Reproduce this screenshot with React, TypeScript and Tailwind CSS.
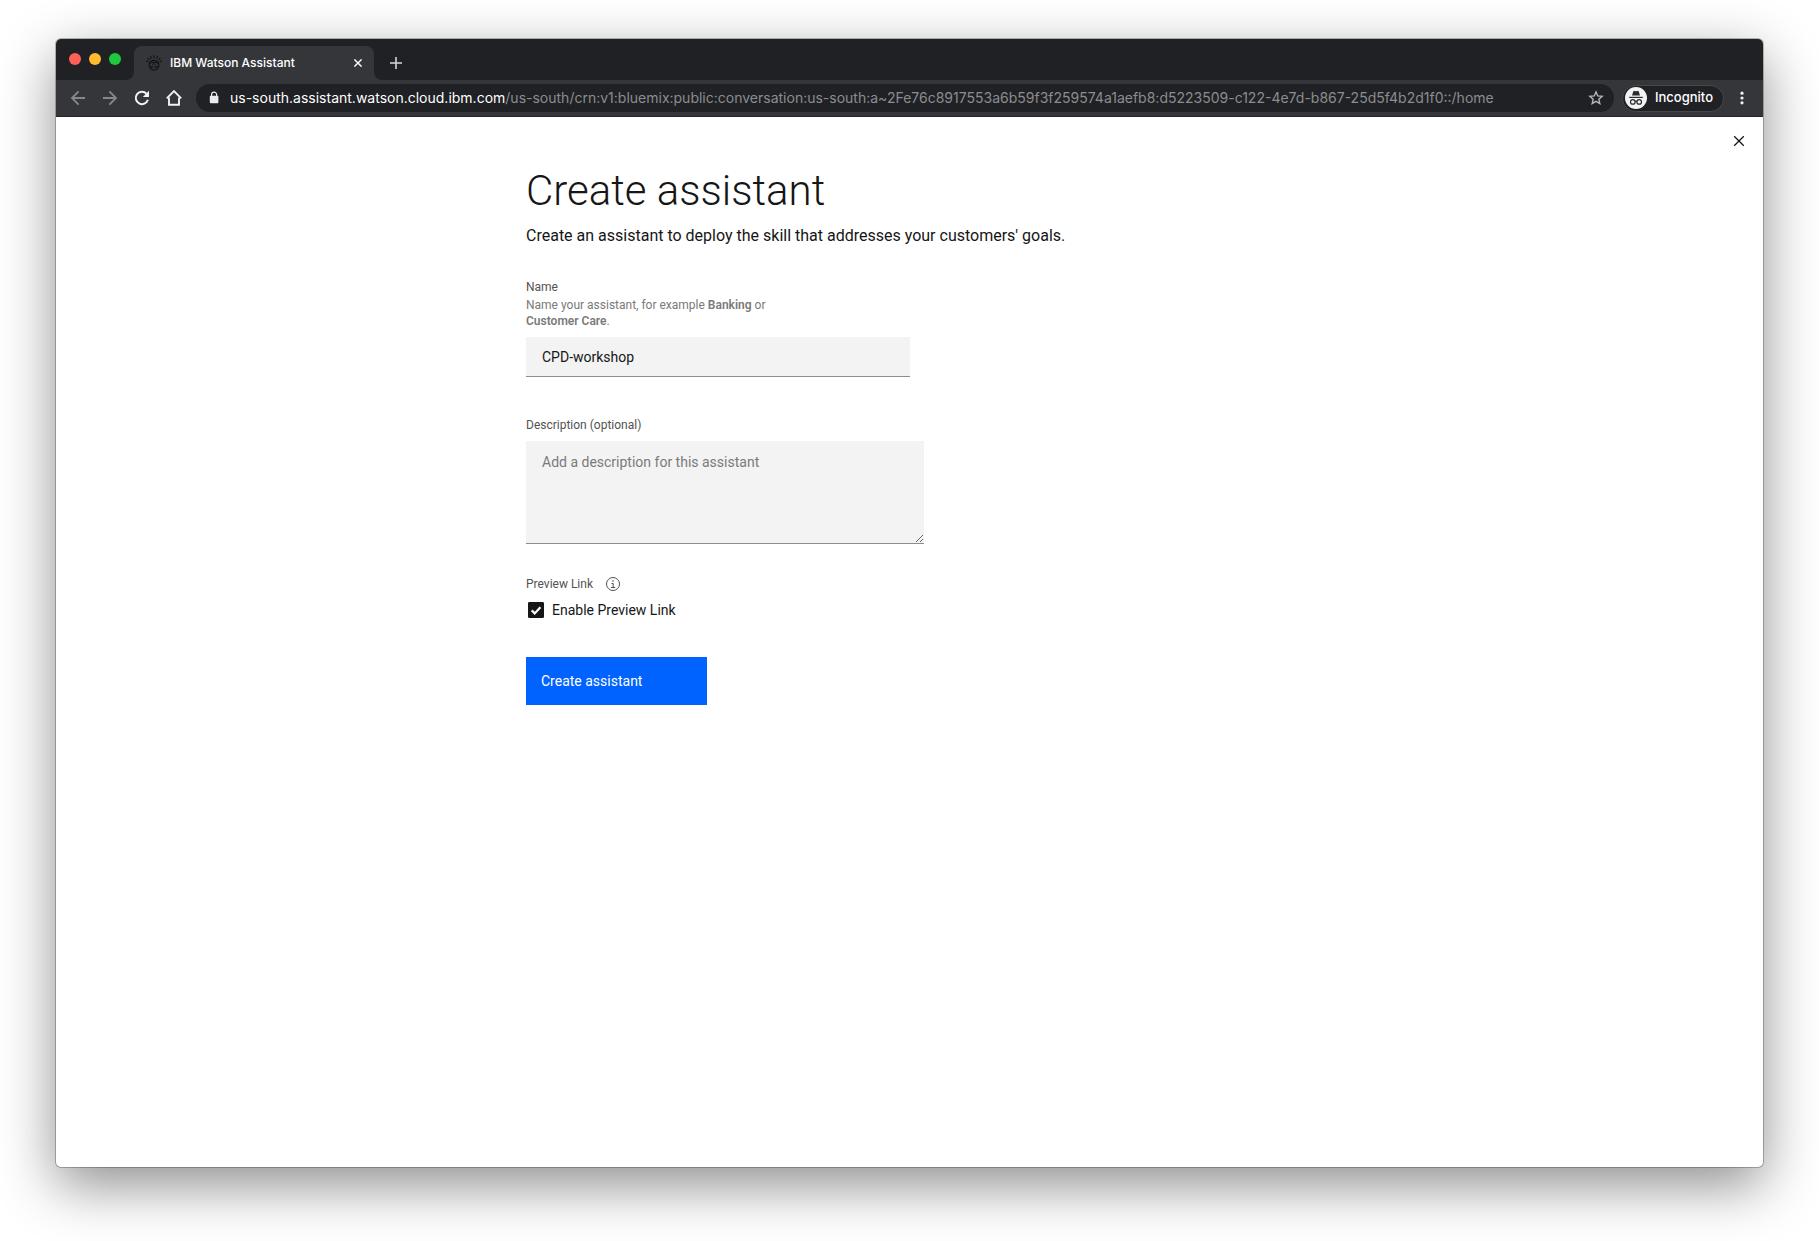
import { useState } from "react";
import type { ReactNode } from "react";

function IconButton({
  label,
  className,
  children,
}: {
  label: string;
  className: string;
  children: ReactNode;
}) {
  return (
    <button type="button" aria-label={label} className={`flex shrink-0 items-center justify-center ${className}`}>
      {children}
    </button>
  );
}

function WatsonLogo() {
  return (
    <svg viewBox="0 0 16 16" className="size-4 shrink-0 text-[#121315]" fill="none" stroke="currentColor" aria-hidden="true">
      <circle cx="8" cy="10.2" r="4.9" strokeWidth="1.2" />
      <path
        d="M3.6 8.4c2.6-1.4 6.2-1.4 8.8 0M3.2 11c3 1.6 6.6 1.6 9.6 0M4.8 13.6c1.8-4.4 4-7 6-7.6M5.2 6.4c2.8 1 4.8 3.6 5.8 7.4"
        strokeWidth="0.8"
      />
      <path d="M8 .2v3M4.4 1l1 2.7M11.6 1l-1 2.7M1.6 2.8l1.8 2.2M14.4 2.8l-1.8 2.2M0 5.8l2.4 1M16 5.8l-2.4 1" strokeWidth="1.1" />
    </svg>
  );
}

function TabStrip() {
  return (
    <div className="flex h-[41px] items-end bg-[#202124]">
      <div className="flex h-[41px] items-center gap-2 pb-0.5 pl-[13px]">
        <button type="button" aria-label="Close window" className="size-3 rounded-full bg-[#ff5f57]" />
        <button type="button" aria-label="Minimize window" className="size-3 rounded-full bg-[#febc2e]" />
        <button type="button" aria-label="Zoom window" className="size-3 rounded-full bg-[#1fc93f]" />
      </div>
      <div className="relative ml-[13px] flex h-[34px] w-60 items-center rounded-t-lg bg-[#35363a] pr-2 pl-3 text-white">
        <svg viewBox="0 0 8 8" className="absolute bottom-0 -left-2 size-2 text-[#35363a]" fill="currentColor" aria-hidden="true">
          <path d="M8 0v8H0a8 8 0 0 0 8-8z" />
        </svg>
        <svg viewBox="0 0 8 8" className="absolute -right-2 bottom-0 size-2 text-[#35363a]" fill="currentColor" aria-hidden="true">
          <path d="M0 0v8h8a8 8 0 0 1-8-8z" />
        </svg>
        <WatsonLogo />
        <span className="ml-2 flex-1 text-xs font-medium">IBM Watson Assistant</span>
        <IconButton label="Close tab" className="size-4">
          <svg viewBox="0 0 8 8" className="size-2" fill="none" stroke="currentColor" strokeWidth="1.4" aria-hidden="true">
            <path d="M.4.4l7.2 7.2M7.6.4L.4 7.6" />
          </svg>
        </IconButton>
      </div>
      <IconButton label="New tab" className="ml-3 h-[34px] w-5 text-[#d5d6d8]">
        <svg viewBox="0 0 12 12" className="size-3" fill="none" stroke="currentColor" strokeWidth="1.6" aria-hidden="true">
          <path d="M6 0v12M0 6h12" />
        </svg>
      </IconButton>
    </div>
  );
}

function Toolbar() {
  return (
    <div className="flex items-center border-b border-[#232427] bg-[#35363a] py-1 pr-[11px]">
      <div className="flex items-center gap-3 pl-3">
        <IconButton label="Back" className="size-5 text-[#87888b]">
          <svg viewBox="0 0 20 20" className="size-5" fill="none" stroke="currentColor" strokeWidth="1.8" aria-hidden="true">
            <path d="M17 10H4.5M10.6 3.4L4 10l6.6 6.6" />
          </svg>
        </IconButton>
        <IconButton label="Forward" className="size-5 text-[#87888b]">
          <svg viewBox="0 0 20 20" className="size-5" fill="none" stroke="currentColor" strokeWidth="1.8" aria-hidden="true">
            <path d="M3 10h12.5M9.4 3.4L16 10l-6.6 6.6" />
          </svg>
        </IconButton>
        <IconButton label="Reload" className="size-5 text-[#f1f2f4]">
          <svg viewBox="0 0 20 20" className="size-5" fill="none" stroke="currentColor" strokeWidth="2" aria-hidden="true">
            <path d="M15.9 11.8A6.2 6.2 0 1 1 14.6 5.8" />
            <path d="M17 2.8V9h-6.2z" fill="currentColor" stroke="none" />
          </svg>
        </IconButton>
        <IconButton label="Home" className="size-5 text-[#f1f2f4]">
          <svg viewBox="0 0 20 20" className="size-5" fill="none" stroke="currentColor" strokeWidth="1.9" aria-hidden="true">
            <path d="M2.8 10.4L10 3.2l7.2 7.2" />
            <path d="M5 9.4v7.4h10V9.4" />
          </svg>
        </IconButton>
      </div>

      <div className="ml-3 flex h-7 min-w-0 flex-1 items-center rounded-full bg-[#202124] pr-2 pl-3">
        <svg viewBox="0 0 12 14" className="h-3.5 w-3 shrink-0 text-[#e8eaed]" aria-hidden="true">
          <rect x="1.8" y="4.8" width="8.6" height="7.4" rx="0.9" fill="currentColor" />
          <path d="M3.6 5V3.6a2.5 2.5 0 0 1 5 0V5" fill="none" stroke="currentColor" strokeWidth="1.2" />
        </svg>
        <div
          role="textbox"
          aria-label="Address"
          tabIndex={0}
          className="ml-2.5 min-w-0 flex-1 overflow-hidden text-sm whitespace-nowrap text-[#8b8d90]"
        >
          <span className="text-white">us-south.assistant.watson.cloud.ibm.com</span>
          /us-south/crn:v1:bluemix:public:conversation:us-south:a~2Fe76c8917553a6b59f3f259574a1aefb8:d5223509-c122-4e7d-b867-25d5f4b2d1f0::/home
        </div>
        <IconButton label="Bookmark this tab" className="size-5 text-[#b5b6b9]">
          <svg viewBox="0 0 20 20" className="size-5" fill="none" stroke="currentColor" strokeWidth="1.4" aria-hidden="true">
            <path d="M10 3.9l1.75 4.05 4.4.4-3.3 2.9.98 4.3L10 13.3l-3.83 2.25.98-4.3-3.3-2.9 4.4-.4z" />
          </svg>
        </IconButton>
      </div>

      <button
        type="button"
        className="ml-2 flex h-[27px] shrink-0 items-center rounded-full border border-[#46474b] bg-[#202124] pr-2.5 pl-0.5 text-white"
      >
        <svg viewBox="0 0 22 22" className="size-[22px]" aria-hidden="true">
          <circle cx="11" cy="11" r="11" fill="#f1f3f4" />
          <g fill="#2b2c2f">
            <path d="M8.3 4.4q.3-.8 1.1-.5l1.6.4 1.6-.4q.8-.3 1.1.5L15 8.4H7z" />
            <rect x="4.2" y="9.8" width="13.6" height="1.2" />
          </g>
          <g fill="none" stroke="#2b2c2f" strokeWidth="1.2">
            <circle cx="7.8" cy="14.9" r="2.3" />
            <circle cx="14.2" cy="14.9" r="2.3" />
            <path d="M10 14.5q1-.7 2 0" />
          </g>
        </svg>
        <span className="ml-2 text-[13px] font-medium">Incognito</span>
      </button>
      <IconButton label="Menu" className="ml-2 size-5 text-[#f1f2f4]">
        <svg viewBox="0 0 20 20" className="size-5" fill="currentColor" aria-hidden="true">
          <circle cx="10" cy="5.2" r="1.6" />
          <circle cx="10" cy="10" r="1.6" />
          <circle cx="10" cy="14.8" r="1.6" />
        </svg>
      </IconButton>
    </div>
  );
}

function CreateAssistantForm() {
  const [name, setName] = useState("CPD-workshop");
  const [description, setDescription] = useState("");
  const [preview, setPreview] = useState(true);

  return (
    <form className="mx-auto max-w-[767px] text-[#161616]" onSubmit={(e) => e.preventDefault()}>
      <h1 className="text-[42px] leading-[50px] font-light">Create assistant</h1>
      <p className="mt-2 text-base leading-6">Create an assistant to deploy the skill that addresses your customers' goals.</p>

      <div className="mt-[31px] flex max-w-96 flex-col">
        <label htmlFor="assistant-name" className="text-xs leading-4 text-[#525252]">
          Name
        </label>
        <p id="assistant-name-help" className="mt-0.5 max-w-72 text-xs leading-4 text-[#7a7a7a]">
          Name your assistant, for example <strong className="font-semibold">Banking</strong> or{" "}
          <strong className="font-semibold">Customer Care</strong>.
        </p>
        <input
          id="assistant-name"
          type="text"
          aria-describedby="assistant-name-help"
          value={name}
          onChange={(e) => setName(e.target.value)}
          className="mt-2 h-10 border-b border-[#8d8d8d] bg-[#f3f3f3] px-4 text-sm outline-none"
        />
      </div>

      <div className="mt-10 flex max-w-[398px] flex-col">
        <label htmlFor="assistant-description" className="text-xs leading-4 text-[#525252]">
          Description (optional)
        </label>
        <textarea
          id="assistant-description"
          placeholder="Add a description for this assistant"
          value={description}
          onChange={(e) => setDescription(e.target.value)}
          className="mt-2 h-[103px] resize border-b border-[#8d8d8d] bg-[#f3f3f3] px-4 py-[11px] text-sm leading-5 outline-none placeholder:text-[#7a7a7a]"
        />
      </div>

      <fieldset className="mt-8">
        <legend className="flex items-center gap-3 text-xs leading-4 text-[#525252]">
          Preview Link
          <button type="button" aria-label="About preview link">
            <svg viewBox="0 0 16 16" className="size-4" fill="none" stroke="currentColor" aria-hidden="true">
              <circle cx="8" cy="8" r="6.5" />
              <path d="M6.5 7.5H8.2V11.5M6 11.5h4.2" />
              <circle cx="8" cy="5" r="0.8" fill="currentColor" stroke="none" />
            </svg>
          </button>
        </legend>
        <label className="mt-2 ml-0.5 flex w-fit items-center gap-2 text-sm leading-5">
          <span className="grid size-4">
            <input
              type="checkbox"
              checked={preview}
              onChange={(e) => setPreview(e.target.checked)}
              className="col-start-1 row-start-1 size-4 appearance-none rounded-[1px] border border-[#161616] checked:bg-[#161616]"
            />
            {preview && (
              <svg
                viewBox="0 0 16 16"
                className="pointer-events-none col-start-1 row-start-1 size-4"
                fill="none"
                stroke="white"
                strokeWidth="2.2"
                aria-hidden="true"
              >
                <path d="M3.7 8.4l3 3 5.7-6.1" />
              </svg>
            )}
          </span>
          Enable Preview Link
        </label>
      </fieldset>

      <button type="submit" className="mt-[37px] h-12 w-[181px] bg-[#0062ff] px-[15px] text-left text-sm text-white">
        Create assistant
      </button>
    </form>
  );
}

export default function App() {
  return (
    <div className="flex min-h-screen flex-col bg-white px-14 pt-[39px] pb-[74px]">
      <div className="flex flex-1 flex-col overflow-hidden rounded-[5px] bg-white shadow-[0_0_0_1px_rgba(0,0,0,0.25),0_18px_56px_rgba(0,0,0,0.45)]">
        <header className="font-['Inter',sans-serif]">
          <TabStrip />
          <Toolbar />
        </header>
        <main className="flex-1 font-['Roboto',sans-serif]">
          <div className="flex justify-end pt-4 pr-4">
            <IconButton label="Close" className="size-4 text-[#161616]">
              <svg viewBox="0 0 16 16" className="size-4" fill="none" stroke="currentColor" strokeWidth="1.3" aria-hidden="true">
                <path d="M3.2 3.2l9.6 9.6M12.8 3.2l-9.6 9.6" />
              </svg>
            </IconButton>
          </div>
          <div className="px-8 pt-[17px]">
            <CreateAssistantForm />
          </div>
        </main>
      </div>
    </div>
  );
}
